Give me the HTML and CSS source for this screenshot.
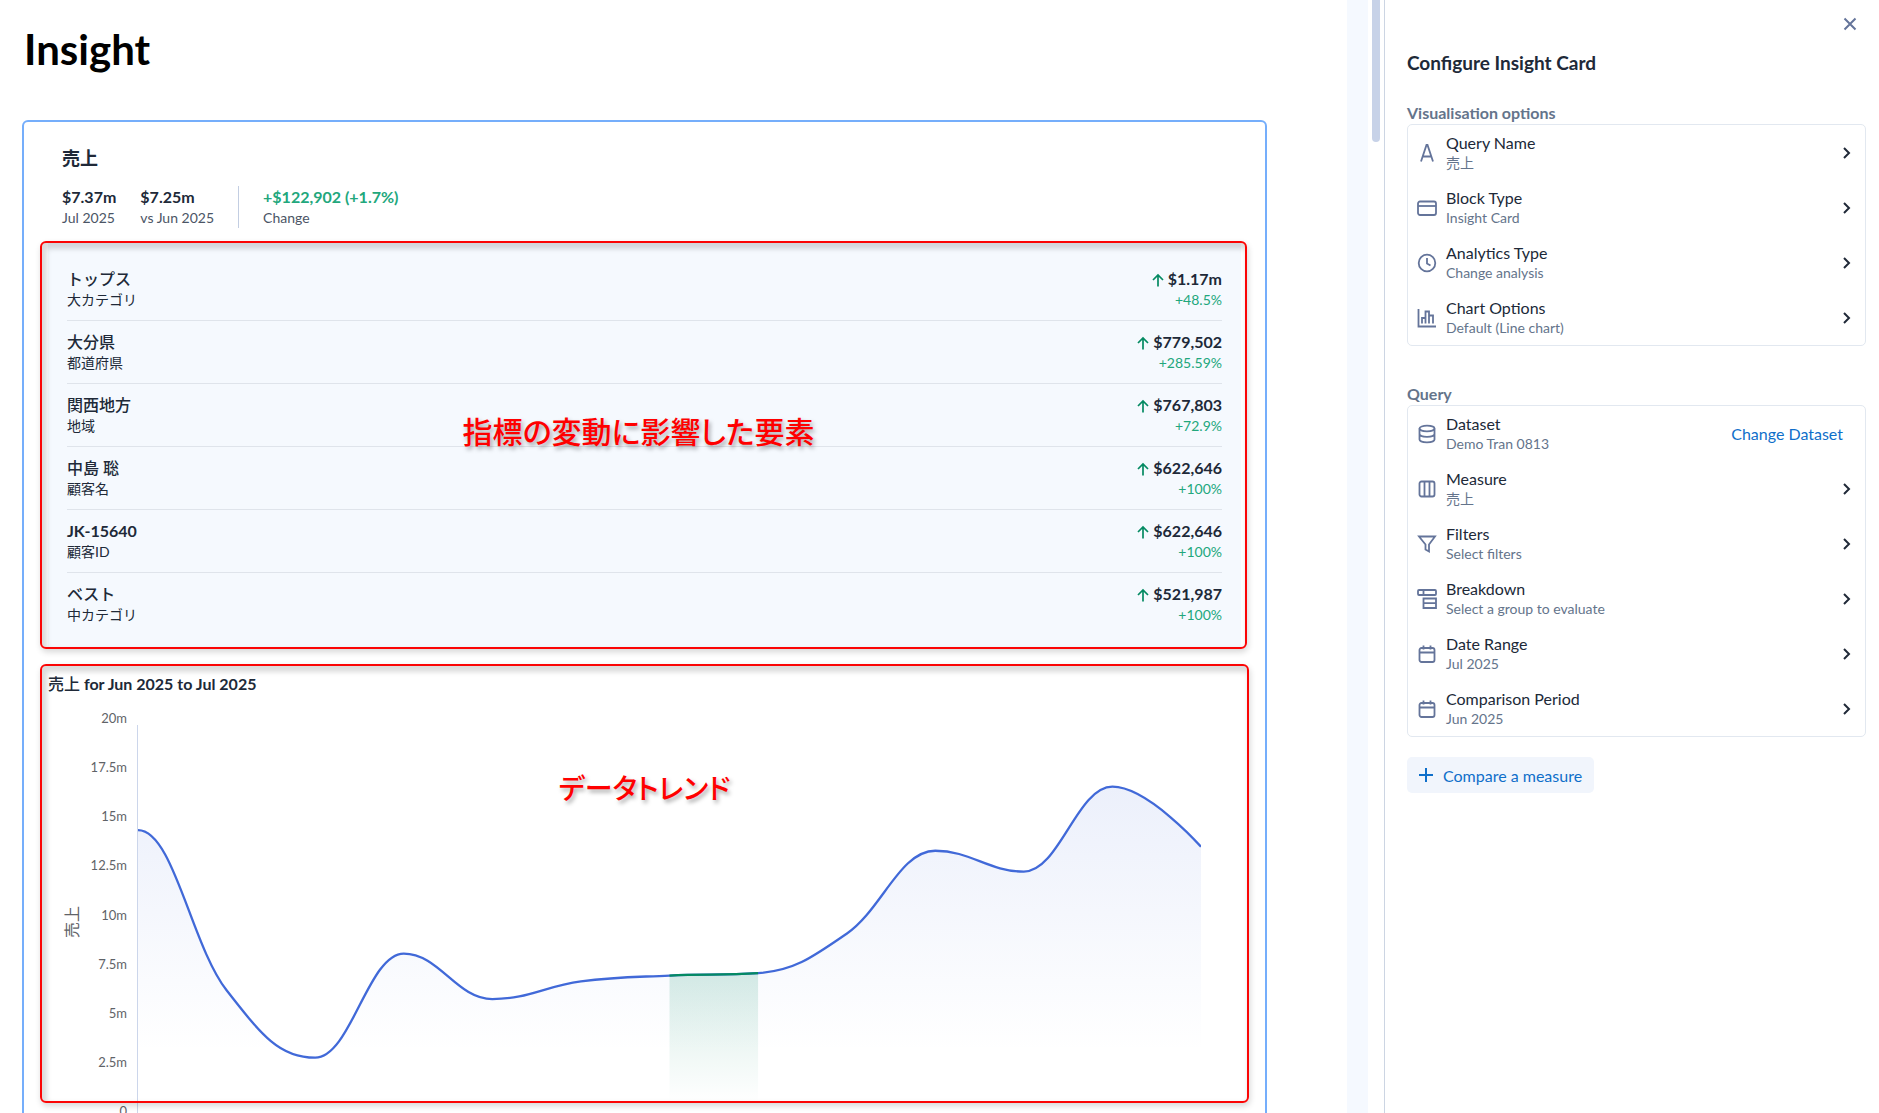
FILE: index.html
```html
<!DOCTYPE html>
<html lang="ja">
<head>
    <meta charset="UTF-8">
    <meta name="viewport" content="width=device-width, initial-scale=1.0">
    <title>Insight</title>
    <link rel="stylesheet" href="styles.css">
</head>
<body>
    <svg class="sprite" aria-hidden="true">
        <symbol id="up" viewBox="0 0 12 14">
            <path d="M6 13.500V2M1 7l5-5 5 5"/>
        </symbol>
        <symbol id="chevron" viewBox="0 0 10 14">
            <path d="M2 2l5 5-5 5"/>
        </symbol>
        <symbol id="calendar" viewBox="0 0 20 20">
            <rect x="2.500" y="4" width="15" height="14" rx="2"/>
            <path d="M2.500 8.500h15M6.500 1.500v4M13.500 1.500v4"/>
        </symbol>
    </svg>
    <main id="main">
        <h1>Insight</h1>
        <article class="card">
            <h2>売上</h2>
            <div class="stats">
                <div>
                    <strong>$7.37m</strong>
                    <span>Jul 2025</span>
                </div>
                <div>
                    <strong>$7.25m</strong>
                    <span>vs Jun 2025</span>
                </div>
                <div class="change">
                    <strong>+$122,902 (+1.7%)</strong>
                    <span>Change</span>
                </div>
            </div>
            <section class="factors">
                <ul>
                    <li>
                        <div><strong class="ja">トップス</strong><span>大カテゴリ</span></div>
                        <div class="value"><strong><svg class="up"><use href="#up"/></svg>$1.17m</strong><span>+48.5%</span></div>
                    </li>
                    <li>
                        <div><strong class="ja">大分県</strong><span>都道府県</span></div>
                        <div class="value"><strong><svg class="up"><use href="#up"/></svg>$779,502</strong><span>+285.59%</span></div>
                    </li>
                    <li>
                        <div><strong class="ja">関西地方</strong><span>地域</span></div>
                        <div class="value"><strong><svg class="up"><use href="#up"/></svg>$767,803</strong><span>+72.9%</span></div>
                    </li>
                    <li>
                        <div><strong class="ja">中島 聡</strong><span>顧客名</span></div>
                        <div class="value"><strong><svg class="up"><use href="#up"/></svg>$622,646</strong><span>+100%</span></div>
                    </li>
                    <li>
                        <div><strong>JK-15640</strong><span>顧客ID</span></div>
                        <div class="value"><strong><svg class="up"><use href="#up"/></svg>$622,646</strong><span>+100%</span></div>
                    </li>
                    <li>
                        <div><strong class="ja">ベスト</strong><span>中カテゴリ</span></div>
                        <div class="value"><strong><svg class="up"><use href="#up"/></svg>$521,987</strong><span>+100%</span></div>
                    </li>
                </ul>
                <div class="callout"><p>指標の変動に影響した要素</p></div>
            </section>
            <section class="trend">
                <h3><span class="ja">売上</span> for Jun 2025 to Jul 2025</h3>
                <div class="chart">
                    <div class="axis-title">売上</div>
                    <div class="ticks">
                        <span>20m</span>
                        <span>17.5m</span>
                        <span>15m</span>
                        <span>12.5m</span>
                        <span>10m</span>
                        <span>7.5m</span>
                        <span>5m</span>
                        <span>2.5m</span>
                        <span>0</span>
                    </div>
                    <svg class="plot" viewBox="0 0 1200 400" preserveAspectRatio="none">
                        <defs>
                            <linearGradient id="blueFade" x1="0" y1="0" x2="0" y2="1">
                                <stop offset="0" stop-color="#4169d8" stop-opacity="0.1"/>
                                <stop offset="0.800" stop-color="#4169d8" stop-opacity="0"/>
                            </linearGradient>
                            <linearGradient id="greenFade" x1="0" y1="0" x2="0" y2="1">
                                <stop offset="0" stop-color="#048a62" stop-opacity="0.16"/>
                                <stop offset="0.900" stop-color="#048a62" stop-opacity="0"/>
                            </linearGradient>
                        </defs>
                        <path id="area" fill="url(#blueFade)"/>
                        <path id="areaNow" fill="url(#greenFade)"/>
                        <path id="line" class="line" stroke-width="2.3"/>
                        <path id="lineNow" class="line now" stroke-width="2.3"/>
                    </svg>
                </div>
                <div class="callout"><p>データトレンド</p></div>
            </section>
        </article>
    </main>
    <div class="gutter"></div>
    <div class="scrollbar"><div class="thumb"></div></div>
    <aside id="config">
        <button class="close" aria-label="Close">
            <svg viewBox="0 0 14 14"><path d="M1.500 1.500l11 11M12.500 1.500l-11 11"/></svg>
        </button>
        <h2>Configure Insight Card</h2>
        <h3>Visualisation options</h3>
        <div class="options">
            <button class="option">
                <svg class="icon" viewBox="0 0 20 20"><path d="M4 18.500L9.500 2h1L16 18.500M5.800 13.500h8.400"/></svg>
                <span class="text"><b>Query Name</b><small>売上</small></span>
                <svg class="chevron"><use href="#chevron"/></svg>
            </button>
            <button class="option">
                <svg class="icon" viewBox="0 0 20 20"><rect x="1" y="3.500" width="18" height="13.500" rx="2"/><path d="M1 8h18"/></svg>
                <span class="text"><b>Block Type</b><small>Insight Card</small></span>
                <svg class="chevron"><use href="#chevron"/></svg>
            </button>
            <button class="option">
                <svg class="icon" viewBox="0 0 20 20"><circle cx="10" cy="10" r="8.300"/><path d="M10 5v5.500l3.500 2"/></svg>
                <span class="text"><b>Analytics Type</b><small>Change analysis</small></span>
                <svg class="chevron"><use href="#chevron"/></svg>
            </button>
            <button class="option">
                <svg class="icon" viewBox="0 0 20 20"><path d="M1.500 1v17.500H19M5 15.500V10h3.500M8.500 15.500V3.500H12v12M12 7.500h4v8"/></svg>
                <span class="text"><b>Chart Options</b><small>Default (Line chart)</small></span>
                <svg class="chevron"><use href="#chevron"/></svg>
            </button>
        </div>
        <h3>Query</h3>
        <div class="options">
            <div class="option">
                <svg class="icon" viewBox="0 0 20 20"><ellipse cx="10" cy="4.500" rx="7.500" ry="2.800"/><path d="M2.500 4.500v11c0 1.600 3.300 2.800 7.500 2.800s7.500-1.200 7.500-2.800v-11M2.500 10c0 1.600 3.300 2.800 7.500 2.800s7.500-1.200 7.500-2.800"/></svg>
                <span class="text"><b>Dataset</b><small>Demo Tran 0813</small></span>
                <a href="#">Change Dataset</a>
            </div>
            <button class="option">
                <svg class="icon" viewBox="0 0 20 20"><rect x="2.500" y="2.500" width="15" height="15" rx="2"/><path d="M7.500 2.500v15M12.500 2.500v15"/></svg>
                <span class="text"><b>Measure</b><small>売上</small></span>
                <svg class="chevron"><use href="#chevron"/></svg>
            </button>
            <button class="option">
                <svg class="icon" viewBox="0 0 20 20"><path d="M2 2.500h16L12 10.500v7L8.500 15.500v-5z"/></svg>
                <span class="text"><b>Filters</b><small>Select filters</small></span>
                <svg class="chevron"><use href="#chevron"/></svg>
            </button>
            <button class="option">
                <svg class="icon" viewBox="0 0 20 20"><rect x="1" y="1" width="18" height="5" rx="1"/><path d="M6.500 1v5M6.500 9.500H19V19H6.500zM6.500 14.200H19"/></svg>
                <span class="text"><b>Breakdown</b><small>Select a group to evaluate</small></span>
                <svg class="chevron"><use href="#chevron"/></svg>
            </button>
            <button class="option">
                <svg class="icon"><use href="#calendar"/></svg>
                <span class="text"><b>Date Range</b><small>Jul 2025</small></span>
                <svg class="chevron"><use href="#chevron"/></svg>
            </button>
            <button class="option">
                <svg class="icon"><use href="#calendar"/></svg>
                <span class="text"><b>Comparison Period</b><small>Jun 2025</small></span>
                <svg class="chevron"><use href="#chevron"/></svg>
            </button>
        </div>
        <button class="compare">
            <svg viewBox="0 0 14 14"><path d="M7 0v14M0 7h14"/></svg>
            Compare a measure
        </button>
    </aside>
    <script src="chart.js"></script>
</body>
</html>
```
FILE: styles.css
```css
*{
    margin: 0;
    padding: 0;
    box-sizing: border-box;
}
body{
    display: flex;
    height: 100vh;
    overflow: hidden;
    background-color: white;
    color: #202938;
    font-family: Lato, "Noto Sans CJK JP", sans-serif;
    font-size: 16px;
}
button{
    border: none;
    background: none;
    font: inherit;
    color: inherit;
    cursor: pointer;
}
svg{
    fill: none;
    stroke: currentColor;
    flex-shrink: 0;
}
strong, h1, h2, h3{
    font-weight: bold;
}
.ja{
    font-weight: 500;
}
.sprite{
    display: none;
}

/* insight page */
#main{
    flex: 1;
    min-width: 0;
    overflow: hidden;
    padding: 20px 80px 0 22px;
}
h1{
    padding-left: 2px;
    margin-bottom: 42px;
    font-size: 42px;
    line-height: 58px;
    color: black;
}
.card{
    border: 2px solid #75aefb;
    border-radius: 6px;
    padding: 24px 24px 40px;
}
.card h2{
    padding-left: 14px;
    margin-bottom: 16px;
    font-size: 18px;
    line-height: 24px;
}
.stats{
    display: flex;
    gap: 24px;
    padding-left: 14px;
    margin-bottom: 14px;
}
.stats strong, .stats span, .factors strong, .factors span{
    display: block;
    line-height: 21px;
}
.stats span, .factors span{
    font-size: 14px;
}
.stats span{
    color: #4b5565;
}
.stats .change{
    border-left: 1px solid #c3cee2;
    padding-left: 24px;
}
.change strong, .factors .value span{
    color: #22a77c;
}
.factors{
    position: relative;
    padding: 16px 19px 13px;
    background-color: #f5f9fe;
}
.factors ul{
    list-style: none;
}
.factors li{
    display: flex;
    justify-content: space-between;
    padding: 10px 0;
    border-bottom: 1px solid #dfe4eb;
}
.factors li:last-child{
    border-bottom: none;
}
.factors .value{
    text-align: right;
}
.up{
    width: 12px;
    height: 14px;
    margin-right: 4px;
    vertical-align: -2px;
    color: #048a62;
    stroke-width: 1.700;
}

/* red notes over the card */
.callout{
    position: absolute;
    top: -1px;
    bottom: -1px;
    left: -8px;
    right: -6px;
    display: flex;
    justify-content: center;
    border: 2px solid #fb0505;
    border-radius: 6px;
    box-shadow: 1px 3px 6px rgba(0, 0, 0, 0.16), inset 3px 4px 5px 2px rgba(0, 0, 0, 0.14);
    pointer-events: none;
}
.callout p{
    padding: 166px 10px 0 0;
    font-size: 30px;
    font-weight: 500;
    line-height: 44px;
    font-feature-settings: "palt";
    color: #ff0000;
    text-shadow: 2px 3px 4px rgba(0, 0, 0, 0.35);
}

.trend{
    position: relative;
    margin-top: 24px;
}
.trend h3{
    margin-bottom: 12px;
    font-size: 16px;
    line-height: 24px;
}
.trend .callout{
    top: -8px;
    bottom: 18px;
    right: -8px;
}
.trend .callout p{
    padding: 100px 0 0;
    font-size: 28px;
}
.chart{
    display: flex;
    padding-right: 40px;
    color: #5f6368;
}
.axis-title{
    width: 48px;
    margin-top: 14px;
    writing-mode: vertical-rl;
    text-orientation: sideways;
    transform: rotate(180deg);
    text-align: center;
    line-height: 48px;
}
.ticks{
    display: flex;
    flex-direction: column;
    justify-content: space-between;
    width: 31px;
    height: 413px;
    margin-right: 10px;
    font-size: 13px;
    line-height: 20px;
    white-space: nowrap;
}
.ticks span{
    align-self: flex-end;
}
.plot{
    flex: 1;
    min-width: 0;
    height: 393px;
    margin-top: 17px;
    border-left: 1px solid #ccd6eb;
    stroke: none;
}
.line{
    fill: none;
    stroke: #4169d8;
    vector-effect: non-scaling-stroke;
}
.now{
    stroke: #048a62;
}

/* scrollbar */
.gutter{
    width: 21px;
    background-color: #f5f9ff;
}
.scrollbar{
    width: 16px;
    padding: 0 4px;
}
.thumb{
    height: 142px;
    background-color: #c7d2e8;
    border-radius: 0 0 4px 4px;
}

/* side panel */
#config{
    display: flex;
    flex-direction: column;
    width: 495px;
    padding: 10px 13px 0 22px;
    border-left: 1px solid #ccd5e3;
}
.close{
    align-self: flex-end;
    width: 24px;
    height: 24px;
    margin-right: 4px;
    line-height: 24px;
    color: #64749a;
}
.close svg{
    width: 14px;
    height: 14px;
    stroke-width: 2;
    vertical-align: middle;
}
#config h2{
    margin: 15px 0 25px;
    font-size: 19px;
    line-height: 28px;
}
#config h3{
    font-size: 16px;
    line-height: 22px;
    color: #64748b;
}
.options{
    border: 1px solid #e2e8f0;
    border-radius: 5px;
}
.options + h3{
    margin-top: 37px;
}
.option{
    display: flex;
    align-items: center;
    width: 100%;
    height: 55px;
    padding: 0 13px 0 9px;
    text-align: left;
}
.icon{
    width: 20px;
    height: 20px;
    margin-right: 9px;
    color: #64749a;
    stroke-width: 1.800;
}
.text{
    flex: 1;
}
.text b, .text small{
    display: block;
    font-weight: normal;
    line-height: 20px;
}
.text small{
    font-size: 14px;
    color: #64748b;
}
.chevron{
    width: 10px;
    height: 14px;
    stroke-width: 2;
}
.option a{
    padding-right: 9px;
    color: #0f6fca;
    text-decoration: none;
}
.compare{
    display: flex;
    align-items: center;
    align-self: flex-start;
    gap: 10px;
    height: 36px;
    margin-top: 20px;
    padding: 0 12px;
    border-radius: 5px;
    background-color: #f1f5fc;
    color: #0f6fca;
}
.compare svg{
    width: 14px;
    height: 14px;
    stroke-width: 2;
}
```
FILE: chart.js
```js
// monthly sales in millions
let sales = [14.65, 6.5, 3.07, 8.37, 6.05, 6.95, 7.25, 7.37, 9.38, 13.6, 12.54, 16.86, 13.8];
let max = 20;
let width = 1200;
let height = 400;
let now = 7; // index of Jul 2025

let points = sales.map((v, i) => ({
    x: i * width / (sales.length - 1),
    y: height - v / max * height
}));

// control points on both sides of each point, kept flat at peaks and dips
function controls(i){
    let p = points[i];
    let prev = points[i - 1];
    let next = points[i + 1];
    if(!prev){
        return {left: p, right: {x: (1.5 * p.x + next.x) / 2.5, y: p.y}};
    }
    if(!next){
        return {left: p, right: p};
    }
    let left = {x: (1.5 * p.x + prev.x) / 2.5, y: (1.5 * p.y + prev.y) / 2.5};
    let right = {x: (1.5 * p.x + next.x) / 2.5, y: (1.5 * p.y + next.y) / 2.5};
    let shift = (right.y - left.y) * (right.x - p.x) / (right.x - left.x) + p.y - right.y;
    left.y += shift;
    right.y += shift;
    if(left.y > Math.max(prev.y, p.y)){
        left.y = Math.max(prev.y, p.y);
        right.y = 2 * p.y - left.y;
    }else if(left.y < Math.min(prev.y, p.y)){
        left.y = Math.min(prev.y, p.y);
        right.y = 2 * p.y - left.y;
    }
    if(right.y > Math.max(next.y, p.y)){
        right.y = Math.max(next.y, p.y);
        left.y = 2 * p.y - right.y;
    }else if(right.y < Math.min(next.y, p.y)){
        right.y = Math.min(next.y, p.y);
        left.y = 2 * p.y - right.y;
    }
    return {left, right};
}

function spline(from, to){
    let d = `M${points[from].x} ${points[from].y}`;
    for(let i = from + 1; i <= to; i++){
        let a = controls(i - 1).right;
        let b = controls(i).left;
        d += `C${a.x} ${a.y} ${b.x} ${b.y} ${points[i].x} ${points[i].y}`;
    }
    return d;
}

function render(lineId, areaId, from, to){
    let d = spline(from, to);
    document.getElementById(lineId).setAttribute('d', d);
    document.getElementById(areaId).setAttribute('d', `${d}V${height}H${points[from].x}Z`);
}

render('line', 'area', 0, sales.length - 1);
render('lineNow', 'areaNow', now - 1, now);
```
